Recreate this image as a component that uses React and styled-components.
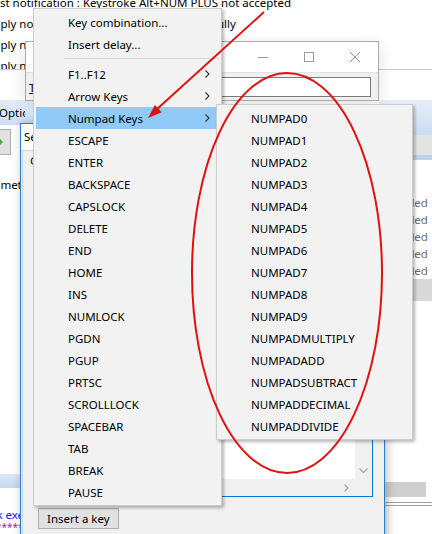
import styled, { createGlobalStyle } from "styled-components";

const GlobalStyle = createGlobalStyle`
  html, body {
    margin: 0;
    padding: 0;
    background: #ffffff;
  }
  body {
    font-family: "Noto Sans", "DejaVu Sans", sans-serif;
    font-size: 11.5px;
    color: #000000;
  }
`;

const mainItems = [
  { label: "Key combination..." },
  { label: "Insert delay..." },
  { separator: true },
  { label: "F1..F12", sub: true },
  { label: "Arrow Keys", sub: true },
  { label: "Numpad Keys", sub: true, active: true },
  { label: "ESCAPE" },
  { label: "ENTER" },
  { label: "BACKSPACE" },
  { label: "CAPSLOCK" },
  { label: "DELETE" },
  { label: "END" },
  { label: "HOME" },
  { label: "INS" },
  { label: "NUMLOCK" },
  { label: "PGDN" },
  { label: "PGUP" },
  { label: "PRTSC" },
  { label: "SCROLLLOCK" },
  { label: "SPACEBAR" },
  { label: "TAB" },
  { label: "BREAK" },
  { label: "PAUSE" },
];

const numpadItems = [
  "NUMPAD0",
  "NUMPAD1",
  "NUMPAD2",
  "NUMPAD3",
  "NUMPAD4",
  "NUMPAD5",
  "NUMPAD6",
  "NUMPAD7",
  "NUMPAD8",
  "NUMPAD9",
  "NUMPADMULTIPLY",
  "NUMPADADD",
  "NUMPADSUBTRACT",
  "NUMPADDECIMAL",
  "NUMPADDIVIDE",
];

const logLines = [
  "Post notification : Keystroke Alt+NUM PLUS not accepted",
  "Apply notification : Keystroke sent successfully",
  "Apply notification : Keystroke sent successfully",
  "Apply notification : Keystroke sent successfully",
];

function Chevron({ dir = "right" }) {
  if (dir === "down") {
    return (
      <svg width="9" height="6" viewBox="0 0 9 6">
        <path d="M0.5 0.5 L4.5 4.5 L8.5 0.5" fill="none" stroke="#a6a6a6" strokeWidth="1.2" />
      </svg>
    );
  }
  return (
    <svg width="5" height="8" viewBox="0 0 5 8">
      <path d="M0.5 0.5 L4 4 L0.5 7.5" fill="none" stroke={dir === "grey" ? "#a6a6a6" : "#333"} strokeWidth="1.1" />
    </svg>
  );
}

function App() {
  return (
    <>
      <GlobalStyle />
      <Desktop>
        <Log>
          {logLines.map((line, i) => (
            <LogLine key={i}>{line}</LogLine>
          ))}
        </Log>

        <BackWindow>
          <LeftStrip>
            <TabBand>
              <Tab>Options</Tab>
            </TabBand>
            <ToolButton>
              <svg width="8" height="10" viewBox="0 0 8 10">
                <path d="M0 2 H3 V0 L8 5 L3 10 V8 H0 Z" fill="#3cb043" />
              </svg>
            </ToolButton>
            <FieldLabel>Parameters</FieldLabel>
            <BottomGroup>
              <BottomBand />
              <LinkText>Check exe</LinkText>
              <StarText>*********</StarText>
            </BottomGroup>
          </LeftStrip>
          <div />
          <RightStrip>
            <RightBand />
            <ColumnHeader />
            <HeaderLine />
            <StateList>
              {[0, 1, 2, 3, 4].map((i) => (
                <StateRow key={i}>Disabled</StateRow>
              ))}
              <SelectedRow />
            </StateList>
            <RightBottom>
              <GreyBar />
              <Rule />
              <Rule />
            </RightBottom>
          </RightStrip>
        </BackWindow>

        <InputDialog>
          <TitleBar>
            <Caption />
            <CaptionButton>
              <svg width="10" height="10" viewBox="0 0 10 10">
                <path d="M0 5.5 H10" stroke="#999" strokeWidth="1" />
              </svg>
            </CaptionButton>
            <CaptionButton>
              <svg width="10" height="10" viewBox="0 0 10 10">
                <rect x="0.5" y="0.5" width="9" height="9" fill="none" stroke="#999" strokeWidth="1" />
              </svg>
            </CaptionButton>
            <CaptionButton>
              <svg width="10" height="10" viewBox="0 0 10 10">
                <path d="M0 0 L10 10 M10 0 L0 10" stroke="#999" strokeWidth="1" />
              </svg>
            </CaptionButton>
          </TitleBar>
          <DialogBody>
            <InputLabel>
              <u>T</u>ext:
            </InputLabel>
            <TextBox />
          </DialogBody>
        </InputDialog>

        <MainDialog>
          <MainTitle>Settings</MainTitle>
          <MainBody>
            <GroupLabel>General</GroupLabel>
            <ListBox>
              <ListArea />
              <VScroll>
                <ScrollArrow>
                  <Chevron dir="down" />
                </ScrollArrow>
              </VScroll>
              <HScroll>
                <ScrollArrow>
                  <Chevron dir="grey" />
                </ScrollArrow>
              </HScroll>
              <ScrollCorner />
            </ListBox>
            <PushButton>Insert a key</PushButton>
          </MainBody>
        </MainDialog>

        <ContextMenu $left={33} $top={8} $width={189}>
          {mainItems.map((item, i) =>
            item.separator ? (
              <Separator key={i} />
            ) : (
              <MenuItem key={i} $active={item.active}>
                <span>{item.label}</span>
                {item.sub && (
                  <Arrow>
                    <Chevron />
                  </Arrow>
                )}
              </MenuItem>
            )
          )}
        </ContextMenu>

        <ContextMenu $left={216} $top={104} $width={197}>
          {numpadItems.map((label) => (
            <MenuItem key={label}>
              <span>{label}</span>
            </MenuItem>
          ))}
        </ContextMenu>

        <Annotation width="432" height="534" viewBox="0 0 432 534">
          <line x1="264" y1="12" x2="156" y2="110" stroke="#e01010" strokeWidth="2" />
          <polygon points="148,118 161.7,112.3 154.9,104.9" fill="#e01010" />
          <ellipse cx="287" cy="273" rx="95" ry="200" fill="none" stroke="#e01010" strokeWidth="2" />
        </Annotation>
      </Desktop>
    </>
  );
}

const Desktop = styled.div`
  position: relative;
  width: 432px;
  height: 534px;
  overflow: hidden;
  background: #ffffff;
`;

const Log = styled.div`
  margin-top: -8px;
  margin-left: -14px;
`;

const LogLine = styled.div`
  height: 21px;
  line-height: 21px;
  white-space: nowrap;
`;

const BackWindow = styled.div`
  position: absolute;
  top: 69px;
  left: 0;
  right: 0;
  bottom: 0;
  display: grid;
  grid-template-columns: 33px 1fr 53px;
  border-top: 1px solid #c9c9c9;
  background: #ffffff;
`;

const LeftStrip = styled.div`
  display: flex;
  flex-direction: column;
  padding-top: 30px;
  overflow: hidden;
`;

const TabBand = styled.div`
  height: 25px;
  background: linear-gradient(#e3edf9, #cddff4);
  display: flex;
  align-items: center;
`;

const Tab = styled.span`
  width: 26px;
  margin-left: -1px;
  overflow: hidden;
  white-space: nowrap;
`;

const ToolButton = styled.div`
  margin-top: 4px;
  margin-left: -3px;
  width: 14px;
  height: 26px;
  box-sizing: border-box;
  border: 1px solid #adadad;
  background: #e1e1e1;
  display: flex;
  align-items: center;
  justify-content: flex-end;
  padding-right: 7px;
`;

const FieldLabel = styled.div`
  margin-top: 22px;
  margin-left: -24px;
  height: 16px;
  line-height: 16px;
  white-space: nowrap;
`;

const BottomGroup = styled.div`
  margin-top: auto;
  display: flex;
  flex-direction: column;
`;

const BottomBand = styled.div`
  height: 14px;
  background: linear-gradient(#dce8f7, #c4d8f0);
`;

const LinkText = styled.div`
  margin-top: 20px;
  margin-left: -30px;
  height: 14px;
  line-height: 14px;
  white-space: nowrap;
  color: #1a1aff;
`;

const StarText = styled.div`
  margin-left: -4px;
  height: 12px;
  line-height: 10px;
  white-space: nowrap;
  color: #9b2b8a;
  font-size: 10px;
`;

const RightStrip = styled.div`
  display: flex;
  flex-direction: column;
  padding-top: 30px;
  overflow: hidden;
`;

const RightBand = styled.div`
  height: 35px;
  background: linear-gradient(#e6eff9, #c9dcf2);
`;

const ColumnHeader = styled.div`
  height: 20px;
  background: #e3e3e3;
`;

const HeaderLine = styled.div`
  height: 5px;
  background: #bcd3ee;
`;

const StateList = styled.div`
  padding-top: 34px;
  display: flex;
  flex-direction: column;
`;

const StateRow = styled.div`
  height: 17px;
  line-height: 17px;
  padding-left: 2px;
  color: #6d6d6d;
  white-space: nowrap;
`;

const SelectedRow = styled.div`
  height: 22px;
  background: #d9d9d9;
`;

const RightBottom = styled.div`
  margin-top: auto;
  padding-bottom: 28px;
  display: flex;
  flex-direction: column;
  gap: 2px;
  background: linear-gradient(90deg, #d6d6d6, #ffffff 12px);
`;

const GreyBar = styled.div`
  height: 15px;
  margin: 0 6px 3px 6px;
  background: #cfcfcf;
`;

const Rule = styled.div`
  height: 1px;
  background: #a0a0a0;
`;

const InputDialog = styled.div`
  position: absolute;
  left: 25px;
  top: 41px;
  width: 354px;
  box-sizing: border-box;
  border: 1px solid #aaaaaa;
  background: #f0f0f0;
  box-shadow: 0 4px 16px rgba(0, 0, 0, 0.12);
`;

const TitleBar = styled.div`
  height: 30px;
  display: flex;
  background: #ffffff;
  border-bottom: 1px solid #e3e3e3;
`;

const Caption = styled.div`
  flex: 1;
`;

const CaptionButton = styled.div`
  width: 46px;
  display: flex;
  align-items: center;
  justify-content: center;
`;

const DialogBody = styled.div`
  display: flex;
  align-items: center;
  padding: 4px 7px 3px 3px;
`;

const InputLabel = styled.span`
  margin-right: 8px;
  white-space: nowrap;
`;

const TextBox = styled.div`
  flex: 1;
  height: 20px;
  box-sizing: border-box;
  border: 1px solid #7a7a7a;
  background: #ffffff;
`;

const MainDialog = styled.div`
  position: absolute;
  left: 20px;
  top: 123px;
  width: 365px;
  height: 430px;
  box-sizing: border-box;
  border: 1px solid #2b79d0;
  background: #f0f0f0;
  display: flex;
  flex-direction: column;
  box-shadow: 2px 0 10px rgba(0, 0, 0, 0.25);
`;

const MainTitle = styled.div`
  height: 26px;
  line-height: 26px;
  padding-left: 3px;
  background: #ffffff;
  border-bottom: 1px solid #cfcfcf;
  white-space: nowrap;
`;

const MainBody = styled.div`
  flex: 1;
  display: flex;
  flex-direction: column;
  padding: 3px 11px 23px 15px;
  border-left: 1px solid #d0d0d0;
  margin-left: 1px;
`;

const GroupLabel = styled.div`
  height: 14px;
  line-height: 14px;
  margin-left: -8px;
`;

const ListBox = styled.div`
  flex: 1;
  margin-top: 120px;
  display: grid;
  grid-template-columns: 1fr 17px;
  grid-template-rows: 1fr 17px;
  border: 1px solid #0078d7;
  background: #ffffff;
`;

const ListArea = styled.div`
  background: #ffffff;
`;

const VScroll = styled.div`
  background: #f0f0f0;
  display: flex;
  flex-direction: column;
  justify-content: flex-end;
`;

const HScroll = styled.div`
  background: #f0f0f0;
  display: flex;
  justify-content: flex-end;
`;

const ScrollArrow = styled.div`
  width: 17px;
  height: 17px;
  display: flex;
  align-items: center;
  justify-content: center;
`;

const ScrollCorner = styled.div`
  background: #f0f0f0;
`;

const PushButton = styled.div`
  margin-top: 11px;
  align-self: flex-start;
  height: 21px;
  line-height: 19px;
  padding: 0 8px;
  box-sizing: border-box;
  border: 1px solid #adadad;
  background: #e1e1e1;
  white-space: nowrap;
`;

const ContextMenu = styled.div`
  position: absolute;
  left: ${(p) => p.$left}px;
  top: ${(p) => p.$top}px;
  width: ${(p) => p.$width}px;
  box-sizing: border-box;
  padding: 2px;
  border: 1px solid #cccccc;
  background: #f2f2f2;
  box-shadow: 2px 2px 3px rgba(0, 0, 0, 0.28);
`;

const MenuItem = styled.div`
  height: 22px;
  display: flex;
  align-items: center;
  padding-left: 32px;
  white-space: nowrap;
  background: ${(p) => (p.$active ? "#91c9f7" : "transparent")};
`;

const Arrow = styled.span`
  margin-left: auto;
  margin-right: 9px;
  display: flex;
`;

const Separator = styled.div`
  height: 1px;
  margin: 3px 0 4px 28px;
  background: #d7d7d7;
`;

const Annotation = styled.svg`
  position: absolute;
  left: 0;
  top: 0;
  pointer-events: none;
`;

export default App;
